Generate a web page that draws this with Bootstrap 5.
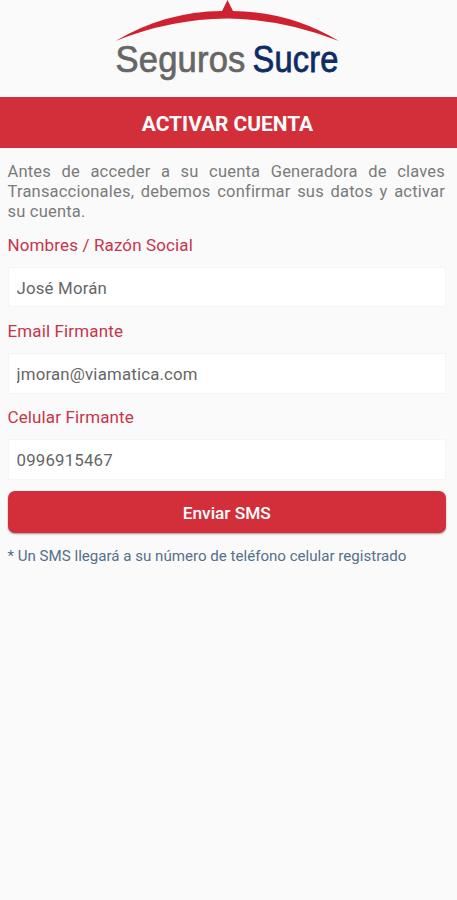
<!DOCTYPE html>
<html lang="es">
<head>
<meta charset="utf-8">
<meta name="viewport" content="width=device-width, initial-scale=1">
<title>Activar cuenta</title>
<link href="https://cdn.jsdelivr.net/npm/bootstrap@5.3.0/dist/css/bootstrap.min.css" rel="stylesheet">
<style>
body{background:#fafafa;color:#7b7b7b;font-family:Roboto,"Liberation Sans",sans-serif;font-size:16.5px;letter-spacing:.2px;line-height:20px}
.brand-header{height:97px}
.title-bar{height:50.5px;background:#d32f3a;font-size:20.9px;letter-spacing:0;padding:5px 2px 0 0}
.content-area{padding:14px 12px 0 7.5px}
.intro-text{text-align:justify;margin-bottom:13px}
.field-label{color:#c7354a;height:20px;margin-bottom:12px;font-size:17px;letter-spacing:.13px}
.field-box{height:40.8px;margin-bottom:13.5px;padding:2px 8px 0;border:1px solid #f5f5f5;border-radius:2px;background:#fff;color:#666;font-size:16.8px;letter-spacing:.2px;width:calc(100% + 1px)}
.field-box:focus{color:#666}
.send-btn{height:42.5px;margin-top:-2.5px;background:#d32f3a;color:#fff;border:0;border-radius:7px;font-size:17.3px;letter-spacing:0;box-shadow:0 1px 2px rgba(0,0,0,.4);width:calc(100% + 1px)}
.send-btn span{padding-top:4px}
.hint-text{color:#54708a;font-size:15.1px;letter-spacing:0;margin-top:13px}
</style>
</head>
<body>
<header class="brand-header d-flex justify-content-center">
<svg width="241" height="97" viewBox="108 0 241 97" role="img" aria-label="Seguros Sucre">
<path d="M115.500 41Q165 11.500 222 11L227.500 0L233 11Q290 11.500 339 41Q283 19 227.500 18.500Q170 19 115.500 41Z" fill="#cf2230"/>
<g font-family="Liberation Sans, Arial, sans-serif" font-size="36.5" stroke-width=".7">
<text x="115.500" y="71.500" textLength="130" lengthAdjust="spacingAndGlyphs" fill="#666" stroke="#666">Seguros</text>
<text x="252.500" y="71.500" textLength="86" lengthAdjust="spacingAndGlyphs" fill="#0d2c66" stroke="#0d2c66" stroke-width=".8">Sucre</text>
</g>
</svg>
</header>
<h1 class="title-bar d-flex align-items-center justify-content-center text-white fw-bold m-0">ACTIVAR CUENTA</h1>
<main class="content-area">
<p class="intro-text">Antes de acceder a su cuenta Generadora de claves Transaccionales, debemos confirmar sus datos y activar su cuenta.</p>
<form>
<label class="field-label d-block" for="nombre">Nombres / Razón Social</label>
<input class="field-box form-control" id="nombre" type="text" value="José Morán">
<label class="field-label d-block" for="email">Email Firmante</label>
<input class="field-box form-control" id="email" type="email" value="jmoran@viamatica.com">
<label class="field-label d-block" for="celular">Celular Firmante</label>
<input class="field-box form-control" id="celular" type="tel" value="0996915467">
<button class="send-btn btn fw-medium p-0 d-flex align-items-center justify-content-center" type="button"><span>Enviar SMS</span></button>
<p class="hint-text mb-0">* Un SMS llegará a su número de teléfono celular registrado</p>
</form>
</main>
<script src="https://cdn.jsdelivr.net/npm/bootstrap@5.3.0/dist/js/bootstrap.bundle.min.js"></script>
</body>
</html>
